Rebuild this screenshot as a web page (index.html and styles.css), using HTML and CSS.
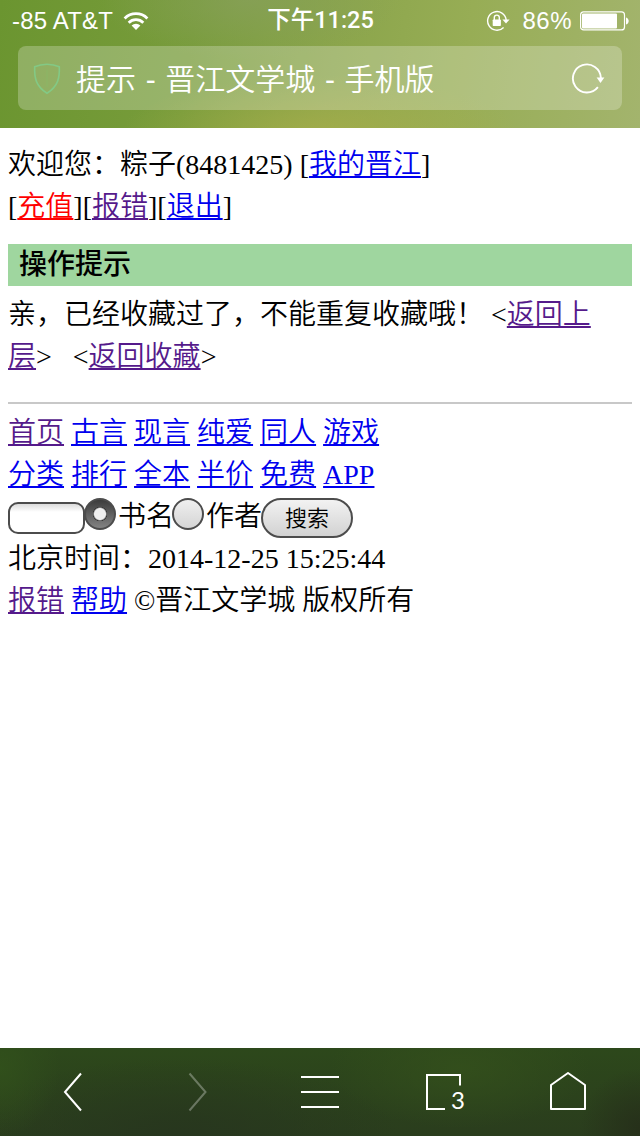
FILE: index.html
```html
<!DOCTYPE html>
<html lang="zh-CN">
<head>
<meta charset="UTF-8">
<meta name="viewport" content="width=device-width, initial-scale=1.0">
<title>提示 - 晋江文学城 - 手机版</title>
<link rel="stylesheet" href="styles.css">
</head>
<body>
<header class="top">
    <div class="status">
        <div class="status-left">
            <span class="carrier">-85 AT&amp;T</span>
            <svg class="wifi" width="26" height="20" viewBox="0 0 26 20">
                <g fill="none" stroke="#fff" stroke-width="2.8">
                    <path d="M1.6 7.4a16.2 16.2 0 0 1 22.8 0"/>
                    <path d="M5.7 11.7a10.4 10.4 0 0 1 14.6 0"/>
                </g>
                <path d="M13 19l-4.4-4.5a6.2 6.2 0 0 1 8.8 0z" fill="#fff"/>
            </svg>
        </div>
        <div class="clock">下午11:25</div>
        <div class="status-right">
            <svg class="lock" width="24" height="22" viewBox="0 0 24 22">
                <path d="M17.6 17.4A9.3 9.3 0 1 1 20.2 10" fill="none" stroke="#fff" stroke-width="1.4"/>
                <path d="M16.4 9.4h7.2L20 13.4z" fill="#fff"/>
                <rect x="6.7" y="9.4" width="8.2" height="6.6" rx=".8" fill="#fff"/>
                <path d="M8.3 10V7.6a2.5 2.5 0 0 1 5 0V10" fill="none" stroke="#fff" stroke-width="1.4"/>
            </svg>
            <span class="percent">86%</span>
            <svg class="battery" width="49" height="20" viewBox="0 0 49 20">
                <rect x=".6" y=".9" width="43.9" height="18" rx="3" fill="none" stroke="#fff" stroke-width="1.2"/>
                <rect x="2" y="2.4" width="35" height="15" rx="1" fill="#fff"/>
                <path d="M46 6.5c3.6 1 3.6 6 0 7z" fill="#fff"/>
            </svg>
        </div>
    </div>
    <div class="address">
        <svg class="shield" width="28" height="32" viewBox="0 0 28 32">
            <path d="M14 1.2c4.5 0 8.5.8 12.3 2.6.5 11-1.3 19.8-12.3 26.4C3 23.600 1.200 14.800 1.700 3.800 5.500 2 9.500 1.200 14 1.200z" fill="none" stroke="#83c985" stroke-width="1.6"/>
            <path d="M14 7v17" stroke="#88bb68" stroke-width="2" opacity=".3"/>
        </svg>
        <span class="title">提示 - 晋江文学城 - 手机版</span>
        <svg class="reload" width="34" height="32" viewBox="0 0 34 32">
            <path d="M26.900 24.100A14 14 0 1 1 29.900 15" fill="none" stroke="#fff" stroke-width="1.9"/>
            <path d="M25.600 14.400H33.400L29.500 20z" fill="#fff"/>
        </svg>
    </div>
</header>

<main class="page">
    <div>欢迎您：粽子(8481425) [<a href="#">我的晋江</a>]</div>
    <div>[<a class="red" href="#">充值</a>][<a class="visited" href="#">报错</a>][<a href="#">退出</a>]</div>
    <h1 class="tip-title">操作提示</h1>
    <div>亲，已经收藏过了，不能重复收藏哦！ &lt;<a class="visited" href="#">返回上<br>层</a>&gt;&nbsp; &nbsp;&lt;<a class="visited" href="#">返回收藏</a>&gt;</div>
    <hr class="line">
    <div>
        <a class="visited" href="#">首页</a>
        <a href="#">古言</a>
        <a href="#">现言</a>
        <a href="#">纯爱</a>
        <a href="#">同人</a>
        <a href="#">游戏</a>
    </div>
    <div>
        <a href="#">分类</a>
        <a href="#">排行</a>
        <a href="#">全本</a>
        <a href="#">半价</a>
        <a href="#">免费</a>
        <a href="#">APP</a>
    </div>
    <form class="search">
        <input class="keyword" type="text" name="kw">
        <input class="radio" type="radio" name="t" id="book" checked>
        <label for="book">书名</label>
        <input class="radio radio-author" type="radio" name="t" id="author">
        <label for="author">作者</label>
        <button class="submit" type="button">搜索</button>
    </form>
    <div>北京时间：2014-12-25 15:25:44</div>
    <div>
        <a class="visited" href="#">报错</a>
        <a href="#">帮助</a>
        ©晋江文学城 版权所有
    </div>
</main>

<nav class="toolbar">
    <svg width="40" height="40" viewBox="0 0 40 40">
        <path d="M29 1.500L13 20l16 18.500" fill="none" stroke="#fff" stroke-width="2"/>
    </svg>
    <svg class="off" width="40" height="40" viewBox="0 0 40 40">
        <path d="M13.500 1.500L29.500 20l-16 18.500" fill="none" stroke="#fff" stroke-width="2"/>
    </svg>
    <svg width="40" height="40" viewBox="0 0 40 40">
        <path d="M1 5h38M1 20h38M1 35h38" stroke="#fff" stroke-width="2"/>
    </svg>
    <div class="tabs">
        <svg width="40" height="40" viewBox="0 0 40 40">
            <path d="M36 13.500V3H3v34h18" fill="none" stroke="#fff" stroke-width="2"/>
        </svg>
        <span class="count">3</span>
    </div>
    <svg width="40" height="40" viewBox="0 0 40 40">
        <path d="M3 37V13L20 1l17 12v24z" fill="none" stroke="#fff" stroke-width="2" stroke-linejoin="round"/>
    </svg>
</nav>
</body>
</html>
```

FILE: styles.css
```css
html, body {
    margin: 0;
    padding: 0;
    height: 100%;
    overflow: hidden;
}

body {
    display: flex;
    flex-direction: column;
    background: #fff;
    color: #000;
    font-family: "Liberation Serif", "Noto Sans CJK SC", serif;
    font-size: 28px;
    font-weight: 350;
    line-height: 42px;
}

svg {
    display: block;
    flex: none;
}

/* browser header */
.top {
    box-sizing: border-box;
    flex: none;
    height: 128px;
    color: #fff;
    font-family: "Liberation Sans", "Noto Sans CJK SC", sans-serif;
    background:
        radial-gradient(ellipse 200px 60px at 320px 135px, rgba(174, 176, 74, 0.65), rgba(174, 176, 74, 0)),
        radial-gradient(ellipse 150px 60px at 250px 0, rgba(136, 160, 92, 0.7), rgba(136, 160, 92, 0)),
        linear-gradient(98deg, #6b9530 0%, #789c3b 30%, #8ba54b 52%, #97ad55 72%, #a3b46d 100%);
}

.status {
    display: grid;
    grid-template-columns: 1fr auto 1fr;
    align-items: center;
    height: 40px;
    padding: 1px 11px 0 12px;
    box-sizing: border-box;
    font-size: 24px;
    line-height: 39px;
}

.status-left,
.status-right {
    display: flex;
    align-items: center;
}

.status-right {
    justify-content: flex-end;
}

.carrier {
    letter-spacing: 0.2px;
}

.wifi {
    margin-left: 10px;
}

.clock {
    font-family: Roboto, "Noto Sans CJK SC", sans-serif;
    font-weight: 500;
    font-size: 23.5px;
}

.percent {
    margin: 0 8px 0 12px;
    letter-spacing: 0.5px;
}

.address {
    box-sizing: border-box;
    display: flex;
    align-items: center;
    height: 64px;
    margin: 6px 18px 0;
    padding: 2px 17px 0 15px;
    border-radius: 8px;
    background: rgba(255, 255, 255, 0.24);
}

.title {
    flex: 1;
    margin-left: 15px;
    padding-top: 1px;
    font-size: 30px;
    word-spacing: 1.3px;
}

/* page content */
.page {
    flex: 1;
    padding: 16px 8px 0;
}

a {
    color: #0000ee;
    text-decoration: underline;
    text-decoration-thickness: 2px;
    text-decoration-skip-ink: none;
    text-underline-offset: 2px;
}

a.visited {
    color: #551a8b;
}

a.red {
    color: #ff0000;
}

.tip-title {
    margin: 16px 0 8px;
    padding-left: 11px;
    background: #9fd69f;
    font-size: 28px;
    font-weight: 500;
}

.line {
    height: 2px;
    margin: 24px 0 8px;
    border: 0;
    background: #c8c8c8;
}

.search {
    display: flex;
    align-items: flex-start;
    height: 42px;
    margin: 0;
}

.keyword {
    box-sizing: border-box;
    width: 77px;
    height: 32px;
    margin: 6px 0 0;
    padding: 0 6px;
    border: 2px solid #4c4c4c;
    border-radius: 10px;
    background: linear-gradient(#dcdcdc, #fff 8px);
}

.radio {
    box-sizing: border-box;
    flex: none;
    appearance: none;
    width: 32px;
    height: 32px;
    margin: 2px 2px 0 -1px;
    border: 2px solid #4c4c4c;
    border-radius: 50%;
    background: linear-gradient(#efefef, #d5d5d5);
}

.radio:checked {
    background:
        radial-gradient(circle at 50% 50%, #eee 0 5.5px, #333 7px, rgba(51, 51, 51, 0) 7.5px),
        linear-gradient(#3c3c3c, #828282);
}

.radio-author {
    margin-left: -2px;
}

.submit {
    box-sizing: border-box;
    width: 92px;
    height: 40px;
    margin: 2px 0 0 -1px;
    padding: 1px 0 0;
    border: 2px solid #4c4c4c;
    border-radius: 20px;
    background: linear-gradient(#f2f2f2, #d2d2d2);
    color: #000;
    font-family: "Liberation Sans", "Noto Sans CJK SC", sans-serif;
    font-size: 22px;
    font-weight: 350;
    line-height: 35px;
}

/* bottom toolbar */
.toolbar {
    box-sizing: border-box;
    display: flex;
    flex: none;
    align-items: center;
    justify-content: space-between;
    height: 88px;
    padding: 0 52px;
    background:
        radial-gradient(ellipse 130px 60px at 460px 20px, rgba(52, 80, 28, 0.8), rgba(52, 80, 28, 0)),
        radial-gradient(ellipse 60px 70px at 0 20px, rgba(50, 82, 27, 0.8), rgba(50, 82, 27, 0)),
        radial-gradient(ellipse 60px 60px at 640px 80px, #26301a, rgba(38, 48, 26, 0)),
        radial-gradient(ellipse 220px 80px at 180px 90px, #27361e, rgba(39, 54, 30, 0)),
        linear-gradient(#2d481b, #2a3d1d);
}

.off {
    opacity: 0.3;
}

.tabs {
    position: relative;
}

.count {
    position: absolute;
    right: -1px;
    bottom: 0;
    color: #fff;
    font-family: Lato, sans-serif;
    font-size: 24px;
    font-weight: 400;
    line-height: 24px;
}
```
